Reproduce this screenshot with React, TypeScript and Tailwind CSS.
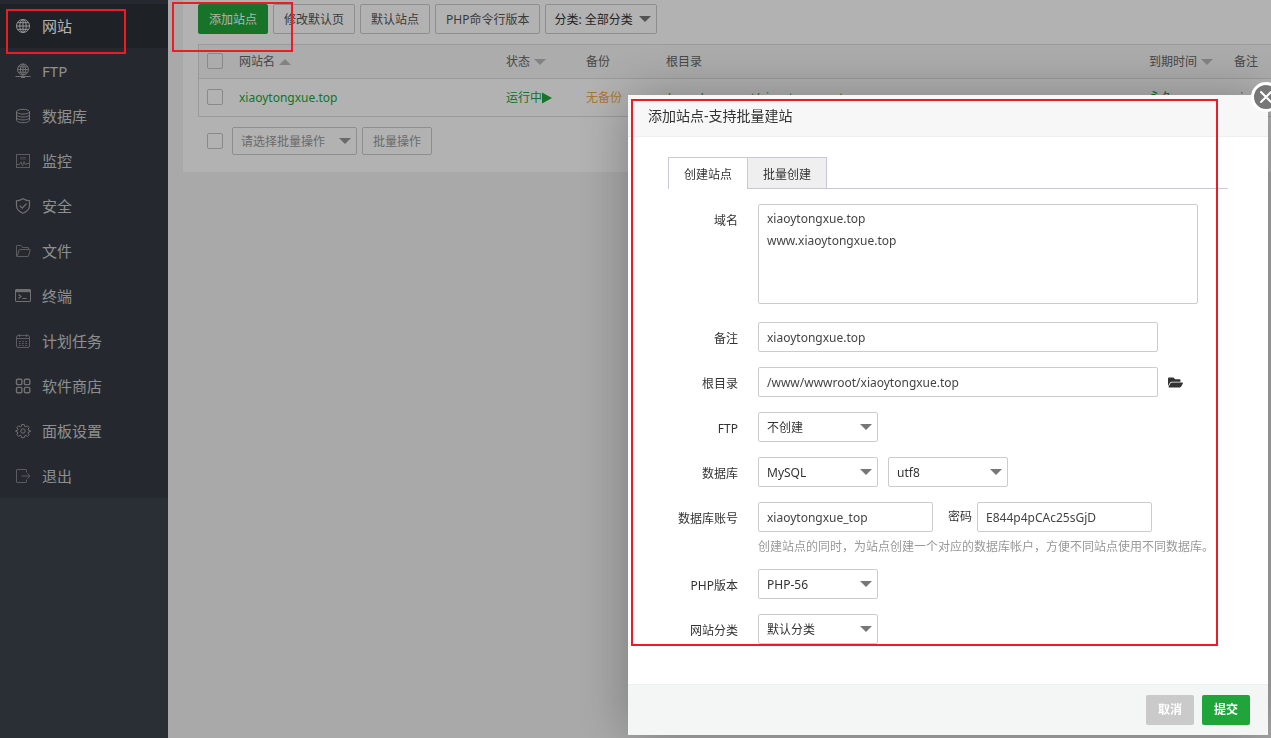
import type { ComponentProps, ReactNode } from "react";
import clsx from "clsx";
import { FaFolderOpen } from "react-icons/fa";

const menu: { label: string; icon: ReactNode; dim?: boolean }[] = [
  {
    label: "网站",
    icon: (
      <>
        <circle cx="8" cy="8" r="6.5" />
        <ellipse cx="8" cy="8" rx="3.2" ry="6.5" />
        <path d="M8 1.5v13M1.5 8h13M2.5 4.7h11M2.5 11.3h11" />
      </>
    ),
  },
  {
    label: "FTP",
    icon: (
      <>
        <circle cx="8" cy="6.5" r="5.5" />
        <ellipse cx="8" cy="6.5" rx="2.6" ry="5.5" />
        <path d="M8 1v11M2.5 6.5h11M3.3 3.8h9.4M3.3 9.2h9.4M.5 13.5h15M6 14.5h4" />
      </>
    ),
  },
  {
    label: "数据库",
    icon: (
      <>
        <ellipse cx="8" cy="3.7" rx="6.5" ry="2.4" />
        <path d="M1.5 3.7v8.6c0 1.3 2.9 2.4 6.5 2.4s6.5-1.1 6.5-2.4V3.7M1.5 6.6C1.5 7.9 4.4 9 8 9s6.5-1.1 6.5-2.4M1.5 9.5c0 1.3 2.9 2.4 6.5 2.4s6.5-1.1 6.5-2.4" />
      </>
    ),
  },
  {
    label: "监控",
    dim: true,
    icon: (
      <>
        <rect x="1.5" y="1.5" width="13" height="13" />
        <path d="M5 4.5h6M5 6h6" opacity="0.6" />
        <path d="M2 11.5h2.5L6 9l1.5 4L9 8.5l1.5 3.5 1-1.5H14" />
      </>
    ),
  },
  {
    label: "安全",
    icon: (
      <>
        <path
          d="M8 .8c2 1.3 4 1.9 6.5 2v4.7c0 3.6-2.5 6.1-6.5 7.7-4-1.6-6.5-4.1-6.5-7.7V2.8C4 2.7 6 2.1 8 .8z"
          strokeWidth="1.2"
        />
        <path d="M4.8 7.6l2.4 2.5 4.3-4.5" strokeWidth="1.3" />
      </>
    ),
  },
  {
    label: "文件",
    dim: true,
    icon: (
      <path d="M2 13.5c-.4 0-.5-.3-.5-.6V3c0-.3.2-.5.5-.5h4l1.5 2H13c.3 0 .5.2.5.5v1.5M2 13.5L4.2 7c.1-.3.3-.5.6-.5h10c.4 0 .5.3.4.6L13.5 13c-.1.3-.3.5-.6.5z" />
    ),
  },
  {
    label: "终端",
    icon: (
      <>
        <rect x=".5" y="1.5" width="15" height="12" rx=".5" />
        <path d="M1 3h14" strokeWidth="2.4" />
        <path d="M3.5 6.5L6 8.5l-2.5 2M7.5 10.5h4" strokeWidth="1.2" />
      </>
    ),
  },
  {
    label: "计划任务",
    dim: true,
    icon: (
      <>
        <rect x="1.5" y="2.5" width="13" height="12" rx="1.5" />
        <path d="M1.5 5.5h13M4.5 1v3M11.5 1v3" />
        <path d="M4 8.5h8M4 10.5h8M4 12.5h8" strokeDasharray="1.6 1.6" />
      </>
    ),
  },
  {
    label: "软件商店",
    icon: (
      <g strokeWidth="1.4">
        <rect x="1.5" y="1.2" width="5.4" height="5.4" rx="1.2" />
        <rect x="9.4" y="1.2" width="5.4" height="5.4" rx="1.2" />
        <rect x="1.5" y="9.4" width="5.4" height="5.4" rx="1.2" />
        <rect x="9.4" y="9.4" width="5.4" height="5.4" rx="1.2" />
      </g>
    ),
  },
  {
    label: "面板设置",
    icon: (
      <>
        <circle cx="8" cy="8" r="2.2" />
        <path d="M6.8 1.5h2.4l.5 1.9 1 .4 1.7-1 1.7 1.7-1 1.7.4 1 1.900.5v.8l-1.900.5-.4 1 1 1.700-1.700 1.700-1.700-1-1 .4-.5 1.900H6.800l-.5-1.900-1-.4-1.700 1-1.700-1.700 1-1.700-.4-1L.800 8.500v-.8l1.700-.5.4-1-1-1.700 1.700-1.700 1.700 1 1-.4z" />
      </>
    ),
  },
  {
    label: "退出",
    dim: true,
    icon: (
      <path d="M11.5 4.5V2c0-.3-.2-.5-.5-.5H2c-.3 0-.5.2-.5.5v12c0 .3.2.5.5.5h9c.3 0 .5-.2.5-.5v-2.5M6.5 8H15M12.5 5.5L15 8l-2.5 2.5" />
    ),
  },
];

function Caret({ up, className }: { up?: boolean; className?: string }) {
  return (
    <svg
      viewBox="0 0 12 6"
      className={clsx("h-1.5 w-3 fill-current", up && "rotate-180", className)}
    >
      <path d="M0 0h12L6 6z" />
    </svg>
  );
}

function Select({
  options,
  className,
  muted,
  ...props
}: ComponentProps<"select"> & { options: string[]; muted?: boolean }) {
  return (
    <span
      className={clsx(
        "relative flex w-fit",
        muted ? "text-[#999]" : "text-[#777]"
      )}
    >
      <select
        className={clsx(
          "appearance-none rounded-xs border border-[#ccc] pl-2 pr-5 pt-[2px] outline-none focus:border-[#20a53a]",
          muted ? "text-[#999]" : "text-[#333]",
          className
        )}
        {...props}
      >
        {options.map((option) => (
          <option key={option}>{option}</option>
        ))}
      </select>
      <Caret className="pointer-events-none absolute right-[6px] top-1/2 -translate-y-1/2" />
    </span>
  );
}

function Checkbox({ label }: { label: string }) {
  return (
    <input
      type="checkbox"
      aria-label={label}
      className="block size-4 appearance-none rounded-xs border border-[#c4c4c4] checked:bg-[#20a53a]"
    />
  );
}

function Row({
  label,
  htmlFor,
  children,
}: {
  label: string;
  htmlFor: string;
  children: ReactNode;
}) {
  return (
    <div className="flex items-start gap-5">
      <label
        htmlFor={htmlFor}
        className="-mb-1 w-[70px] shrink-0 text-right leading-[34px]"
      >
        {label}
      </label>
      <div className="min-w-0 flex-1">{children}</div>
    </div>
  );
}

const field =
  "rounded-xs border border-[#ccc] bg-white px-2 text-[#444] outline-none focus:border-[#20a53a]";

const toolButton =
  "h-[30px] shrink-0 rounded-xs border border-[#ccc] px-[10px] pt-[2px] text-[#555]";

function Sidebar() {
  return (
    <aside className="w-[168px] shrink-0 bg-[#3d444d]">
      <nav className="flex flex-col gap-px bg-[#363c44] pt-1">
        {menu.map((item, i) => (
          <a
            key={item.label}
            href="#"
            className={clsx(
              "flex h-11 items-center gap-[11px] pl-[15px] text-[15px]",
              i === 0 ? "bg-[#2c3138] text-white" : "text-[#ccc]"
            )}
          >
            <svg
              viewBox="0 0 16 16"
              fill="none"
              stroke="currentColor"
              className={clsx(
                "size-4",
                i === 0 ? "opacity-80" : item.dim ? "opacity-50" : "opacity-70"
              )}
            >
              {item.icon}
            </svg>
            {item.label}
          </a>
        ))}
      </nav>
    </aside>
  );
}

function SiteList() {
  return (
    <main className="min-w-0 flex-1 overflow-hidden bg-[#f2f2f2] pl-[15px]">
      <div className="bg-white pb-[17px] pl-[15px] pt-1">
        <div className="flex gap-[5px]">
          <button className="h-[30px] shrink-0 rounded-xs border border-[#20a53a] bg-[#20a53a] px-[10px] pt-[2px] text-white">
            添加站点
          </button>
          <button className={toolButton}>修改默认页</button>
          <button className={toolButton}>默认站点</button>
          <button className={toolButton}>PHP命令行版本</button>
          <Select
            aria-label="分类"
            options={["分类: 全部分类"]}
            className="h-[30px] w-[112px]"
          />
        </div>

        <div className="mt-[10px] border border-r-0 border-[#ddd]">
          <table className="w-full table-fixed whitespace-nowrap text-left">
            <colgroup>
              <col className="w-8" />
              <col className="w-[267px]" />
              <col className="w-20" />
              <col className="w-20" />
              <col />
              <col className="w-[85px]" />
              <col className="w-[45px]" />
            </colgroup>
            <thead className="bg-[#f6f6f6] text-[#666]">
              <tr className="h-[33px] border-b border-[#ddd] [&>th]:px-2 [&>th]:font-normal [&>th+th]:pt-[2px]">
                <th>
                  <Checkbox label="全选" />
                </th>
                <th>
                  <span className="flex items-center gap-1">
                    网站名
                    <Caret up className="text-[#bbb]" />
                  </span>
                </th>
                <th>
                  <span className="flex items-center gap-1">
                    状态
                    <Caret className="text-[#bbb]" />
                  </span>
                </th>
                <th>备份</th>
                <th>根目录</th>
                <th>
                  <span className="flex items-center gap-1">
                    到期时间
                    <Caret className="text-[#bbb]" />
                  </span>
                </th>
                <th>备注</th>
              </tr>
            </thead>
            <tbody>
              <tr className="h-[38px] text-[#20a53a] [&>td]:px-2 [&>td+td]:pt-[2px]">
                <td>
                  <Checkbox label="xiaoytongxue.top" />
                </td>
                <td>
                  <a href="#">xiaoytongxue.top</a>
                </td>
                <td>
                  <a href="#" className="flex items-center">
                    运行中
                    <svg viewBox="0 0 10 12" className="h-3 w-[10px] fill-current">
                      <path d="M0 .5L10 6 0 11.5z" />
                    </svg>
                  </a>
                </td>
                <td>
                  <a href="#" className="text-[#f0ad4e]">
                    无备份
                  </a>
                </td>
                <td>
                  <a href="#">/www/wwwroot/xiaoytongxue.top</a>
                </td>
                <td>
                  <a href="#">永久</a>
                </td>
                <td className="text-[#666]">
                  <span className="block truncate">xiaoytongxue.top</span>
                </td>
              </tr>
            </tbody>
          </table>
        </div>

        <div className="mt-[10px] flex items-center pl-[9px]">
          <Checkbox label="选择全部网站" />
          <div className="ml-[9px] flex gap-[5px]">
            <Select
              muted
              aria-label="批量操作"
              options={["请选择批量操作"]}
              className="h-7 w-[125px]"
            />
            <button className="h-7 rounded-xs border border-[#ccc] px-[10px] pt-[2px] text-[#999]">
              批量操作
            </button>
          </div>
        </div>
      </div>
    </main>
  );
}

function AddSiteDialog() {
  return (
    <div
      role="dialog"
      aria-label="添加站点"
      className="fixed right-[3px] top-[95px] w-[640px] bg-white text-[#333] shadow-[1px_1px_50px_rgba(0,0,0,0.3)]"
    >
      <h2 className="flex h-[42px] items-center border-b border-[#eee] bg-[#f7f7f7] px-5 text-sm">
        添加站点-支持批量建站
      </h2>

      <div className="px-10 pb-10 pt-5">
        <div role="tablist" className="flex h-8 border-b border-[#c9c7d9]">
          <button
            role="tab"
            aria-selected="true"
            className="-mb-px w-20 border border-b-0 border-[#c9c7d9] bg-white pt-[2px]"
          >
            创建站点
          </button>
          <button
            role="tab"
            aria-selected="false"
            className="-mb-px -ml-px w-20 border border-[#c9c7d9] bg-[#efefef] pt-[3px]"
          >
            批量创建
          </button>
        </div>

        <form className="mt-[15px] flex flex-col gap-[15px]">
          <Row label="域名" htmlFor="domain">
            <textarea
              id="domain"
              defaultValue={"xiaoytongxue.top\nwww.xiaoytongxue.top"}
              className={clsx(
                field,
                "mb-[3px] block h-[100px] w-[440px] resize-none py-[3px] leading-[22px]"
              )}
            />
          </Row>
          <Row label="备注" htmlFor="remark">
            <input
              id="remark"
              defaultValue="xiaoytongxue.top"
              className={clsx(field, "block h-[30px] w-[400px]")}
            />
          </Row>
          <Row label="根目录" htmlFor="path">
            <div className="flex items-center gap-[10px]">
              <input
                id="path"
                defaultValue="/www/wwwroot/xiaoytongxue.top"
                className={clsx(field, "h-[30px] w-[400px]")}
              />
              <button type="button" aria-label="选择目录">
                <FaFolderOpen size={15} />
              </button>
            </div>
          </Row>
          <Row label="FTP" htmlFor="ftp">
            <Select
              id="ftp"
              options={["不创建", "创建"]}
              className="h-[30px] w-[120px]"
            />
          </Row>
          <Row label="数据库" htmlFor="database">
            <div className="flex gap-[10px]">
              <Select
                id="database"
                defaultValue="MySQL"
                options={["不创建", "MySQL"]}
                className="h-[30px] w-[120px]"
              />
              <Select
                aria-label="字符集"
                options={["utf8", "utf8mb4", "gbk", "big5"]}
                className="h-[30px] w-[120px]"
              />
            </div>
          </Row>
          <Row label="数据库账号" htmlFor="db-user">
            <div className="flex items-center">
              <input
                id="db-user"
                defaultValue="xiaoytongxue_top"
                className={clsx(field, "h-[30px] w-[175px]")}
              />
              <label htmlFor="db-password" className="ml-[15px] mr-[5px]">
                密码
              </label>
              <input
                id="db-password"
                defaultValue="E844p4pCAc25sGjD"
                className={clsx(field, "h-[30px] w-[175px]")}
              />
            </div>
            <p className="-mb-2 whitespace-nowrap leading-[30px] text-[#999]">
              创建站点的同时，为站点创建一个对应的数据库帐户，方便不同站点使用不同数据库。
            </p>
          </Row>
          <Row label="PHP版本" htmlFor="php">
            <Select
              id="php"
              options={["PHP-56"]}
              className="h-[30px] w-[120px]"
            />
          </Row>
          <Row label="网站分类" htmlFor="category">
            <Select
              id="category"
              options={["默认分类"]}
              className="h-[30px] w-[120px]"
            />
          </Row>
        </form>
      </div>

      <div className="flex justify-end gap-2 border-t border-[#edf1f2] bg-[#f4f6f6] px-[18px] py-[10px] font-bold text-white">
        <button className="h-[30px] w-12 rounded-xs bg-[#cacaca]">取消</button>
        <button className="h-[30px] w-12 rounded-xs bg-[#20a53a]">提交</button>
      </div>

      <button
        aria-label="关闭"
        className="absolute -right-[13px] -top-[13px] flex size-[30px] items-center justify-center rounded-full border-3 border-white bg-[#777]"
      >
        <svg
          viewBox="0 0 12 12"
          className="size-3 stroke-white stroke-2"
          strokeLinecap="round"
        >
          <path d="M1 1l10 10M11 1L1 11" />
        </svg>
      </button>

      <div className="pointer-events-none absolute left-[3px] top-1 h-[547px] w-[587px] border-2 border-[#ed1c24]" />
    </div>
  );
}

export default function App() {
  return (
    <div className="relative flex min-h-screen overflow-hidden font-['Noto_Sans','Noto_Sans_CJK_SC',sans-serif] text-xs">
      <Sidebar />
      <SiteList />
      <div className="fixed inset-0 bg-black/30" />
      <AddSiteDialog />
      <div className="pointer-events-none absolute left-[6px] top-[9px] h-[45px] w-[120px] border-2 border-[#ed1c24]" />
      <div className="pointer-events-none absolute left-[172px] top-[2px] h-[50px] w-[121px] border-2 border-[#ed1c24]" />
    </div>
  );
}
